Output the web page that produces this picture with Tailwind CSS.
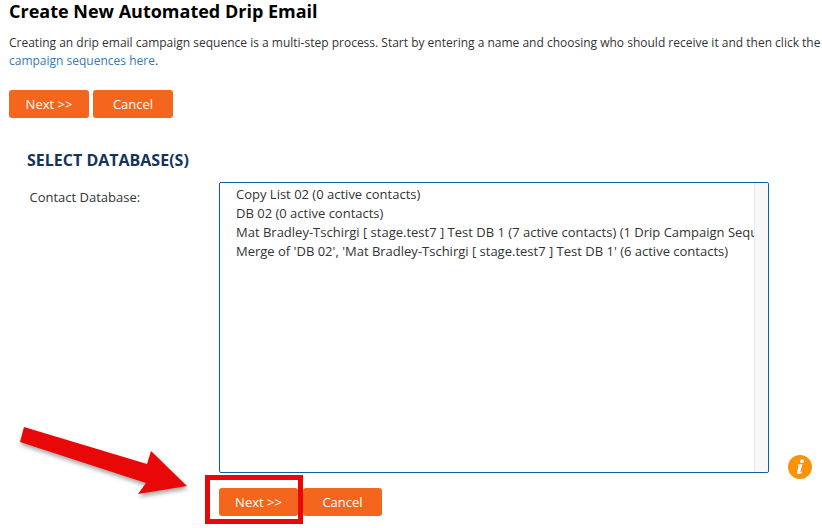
<!DOCTYPE html>
<html>
<head>
<meta charset="utf-8">
<script src="https://cdn.jsdelivr.net/npm/@tailwindcss/browser@4"></script>
</head>
<body class="bg-white">
<div class="relative w-[822px] h-[528px] overflow-hidden font-['Open_Sans',sans-serif] text-[#333]">
  <div class="pl-[9px]">
    <h1 class="mt-[-1px] text-[18px] leading-[24px] font-bold text-black whitespace-nowrap">Create New Automated Drip Email</h1>
    <p class="mt-[11px] w-[813px] h-[36px] text-[12px] leading-[18px] overflow-hidden">
      <span class="block whitespace-nowrap">Creating an drip email campaign sequence is a multi-step process. Start by entering a name and choosing who should receive it and then click the</span>
      <span class="block whitespace-nowrap"><a class="text-[#337ab7]">campaign sequences here</a>.</span>
    </p>
    <div class="mt-[20px] flex gap-[4px]">
      <button class="w-[80px] h-[28px] pt-[1px] rounded-[3px] bg-[#f4661e] text-white text-[13px]">Next &gt;&gt;</button>
      <button class="w-[80px] h-[28px] pt-[1px] rounded-[3px] bg-[#f4661e] text-white text-[13px]">Cancel</button>
    </div>
  </div>
  <h2 class="mt-[32px] ml-[27px] text-[16px] leading-[20px] font-bold text-[#14345a]">SELECT DATABASE(S)</h2>
  <div class="mt-[12px] flex">
    <div class="w-[219px] pl-[29.5px] pt-[6px] text-[13px] leading-[18px]">Contact Database:</div>
    <div class="flex flex-col">
      <div class="flex items-end">
        <div class="w-[550px] h-[291px] border border-[#0b5ea8] rounded-[2px] flex overflow-hidden">
          <div class="w-[534px] pl-[16px] pt-[2px] text-[13px] leading-[19px] overflow-hidden whitespace-nowrap">
            <div>Copy List 02 (0 active contacts)</div>
            <div>DB 02 (0 active contacts)</div>
            <div>Mat Bradley-Tschirgi [ stage.test7 ] Test DB 1 (7 active contacts) (1 Drip Campaign Sequence)</div>
            <div>Merge of 'DB 02', 'Mat Bradley-Tschirgi [ stage.test7 ] Test DB 1' (6 active contacts)</div>
          </div>
          <div class="flex-1 bg-[#f7f7f7] border-l border-[#e6e6e6]"></div>
        </div>
        <svg class="ml-[19px] mb-[-6px] w-[24px] h-[24px]" viewBox="0 0 24 24">
          <circle cx="12" cy="12" r="12" fill="#fb9209"/>
          <path d="M10.4 9.2h4l-2 7.4c-.15.6.3.7 1.5-.2l.4.6c-1.4 1.6-2.6 2.2-3.8 2.2-1.3 0-1.8-.8-1.5-2l1.5-5.7c.15-.7-.4-.8-1-.7z" fill="#fff"/>
          <circle cx="14" cy="6.2" r="1.9" fill="#fff"/>
        </svg>
      </div>
      <div class="mt-[15px] flex gap-[5px]">
        <button class="w-[79px] h-[28px] pt-[1px] rounded-[3px] bg-[#f4661e] text-white text-[13px]">Next &gt;&gt;</button>
        <button class="w-[79px] h-[28px] pt-[1px] rounded-[3px] bg-[#f4661e] text-white text-[13px]">Cancel</button>
      </div>
    </div>
  </div>
  <div class="absolute left-[205px] top-[475px] w-[98px] h-[49px] border-[5px] border-[#e90808]"></div>
  <svg class="absolute left-0 top-[410px] w-[200px] h-[100px] drop-shadow-[1px_3px_2px_rgba(0,0,0,0.35)]" viewBox="0 0 200 100">
    <polygon points="24,17 20,32 146,73 138,84 187,76 151,41 147,54" fill="#e90808"/>
  </svg>
</div>
</body>
</html>
